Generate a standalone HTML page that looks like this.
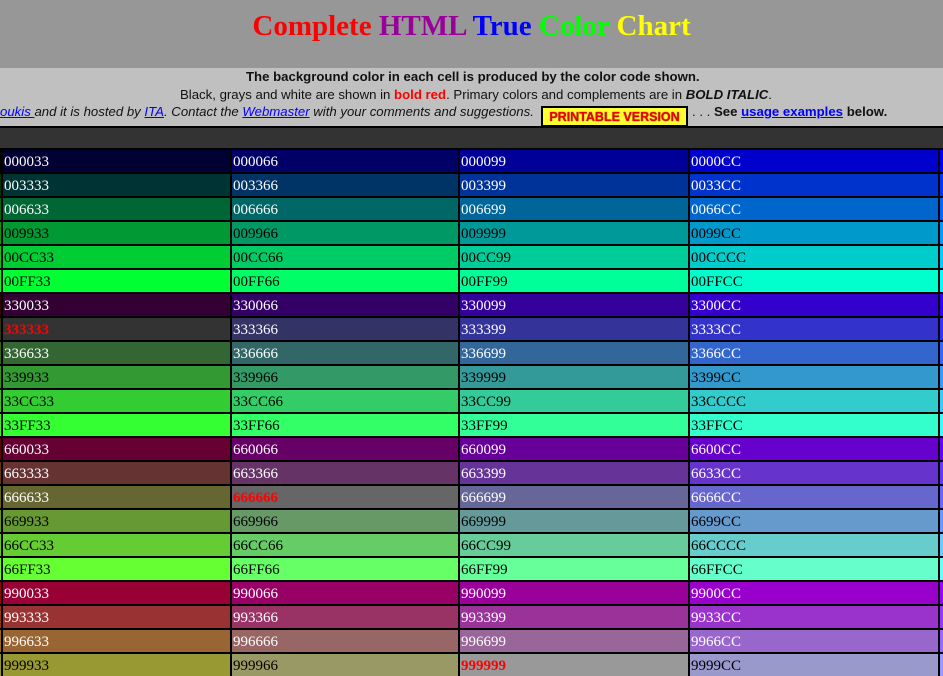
<!DOCTYPE html>
<html><head><meta charset="utf-8"><style>
body{margin:0;width:943px;height:674px;overflow:hidden;background:#000;position:relative;font-family:"Liberation Sans",sans-serif}
#hd{position:absolute;left:0;top:0;width:943px;height:68px;background:#979797}
#hd h1{margin:0;position:absolute;left:0;width:943px;top:10px;text-align:center;font:bold 29px "Liberation Serif",serif;white-space:nowrap}
#info{position:absolute;left:0;top:68px;width:943px;height:58px;background:#c0c0c0;font-size:13.2px;color:#111}
.l{position:absolute;white-space:nowrap}
#bar{position:absolute;left:0;top:128px;width:943px;height:20px;background:#333}
#g{position:absolute;left:0;top:150px;display:grid;grid-template-columns:1px 227px 226px 228px 248px 10px;column-gap:2px;row-gap:2px}
#g div{height:22px;font:15px/22px "Liberation Serif",serif;color:#fff;padding-left:1px;padding-top:1px;box-sizing:border-box;overflow:hidden;white-space:nowrap}
#g div.k{color:#000}
#g div.r{color:#f00;font-weight:bold}
a{color:#00f}
</style></head><body>
<div id="hd"><h1><span style="color:#f00">Complete</span> <span style="color:#909">HTML</span> <span style="color:#00f">True</span> <span style="color:#0f0">Color</span> <span style="color:#ff0">Chart</span></h1></div>
<div id="info">
<div class="l" style="left:246px;top:1px;font-weight:bold">The background color in each cell is produced by the color code shown.</div>
<div class="l" style="left:180px;top:19px">Black, grays and white are shown in <b style="color:#f00">bold red</b>. Primary colors and complements are in <b><i>BOLD ITALIC</i></b>.</div>
<div class="l" style="left:0;top:36px"><i><a href="#">oukis </a> and it is hosted by <a href="#">ITA</a>. Contact the <a href="#">Webmaster</a> with your comments and suggestions.</i></div>
<div class="l" style="left:541px;top:38px;width:143px;height:17px;background:#ff3;border:2px solid #000;color:#e00;font-weight:bold;font-size:12.5px;text-align:center;line-height:19px;text-shadow:0 0 1px #600">PRINTABLE VERSION</div>
<div class="l" style="left:692px;top:36px">. . . <b>See <a href="#">usage examples</a> below.</b></div>
</div>
<div id="bar"></div>
<div id="g">
<div style="background:#000000"></div><div style="background:#000033">000033</div><div style="background:#000066">000066</div><div style="background:#000099">000099</div><div style="background:#0000CC">0000CC</div><div style="background:#0000FF"></div>
<div style="background:#003300"></div><div style="background:#003333">003333</div><div style="background:#003366">003366</div><div style="background:#003399">003399</div><div style="background:#0033CC">0033CC</div><div style="background:#0033FF"></div>
<div style="background:#006600"></div><div style="background:#006633">006633</div><div style="background:#006666">006666</div><div style="background:#006699">006699</div><div style="background:#0066CC">0066CC</div><div style="background:#0066FF"></div>
<div style="background:#009900"></div><div class="k" style="background:#009933">009933</div><div class="k" style="background:#009966">009966</div><div class="k" style="background:#009999">009999</div><div class="k" style="background:#0099CC">0099CC</div><div style="background:#0099FF"></div>
<div style="background:#00CC00"></div><div class="k" style="background:#00CC33">00CC33</div><div class="k" style="background:#00CC66">00CC66</div><div class="k" style="background:#00CC99">00CC99</div><div class="k" style="background:#00CCCC">00CCCC</div><div style="background:#00CCFF"></div>
<div style="background:#00FF00"></div><div class="k" style="background:#00FF33">00FF33</div><div class="k" style="background:#00FF66">00FF66</div><div class="k" style="background:#00FF99">00FF99</div><div class="k" style="background:#00FFCC">00FFCC</div><div style="background:#00FFFF"></div>
<div style="background:#330000"></div><div style="background:#330033">330033</div><div style="background:#330066">330066</div><div style="background:#330099">330099</div><div style="background:#3300CC">3300CC</div><div style="background:#3300FF"></div>
<div style="background:#333300"></div><div class="r" style="background:#333333">333333</div><div style="background:#333366">333366</div><div style="background:#333399">333399</div><div style="background:#3333CC">3333CC</div><div style="background:#3333FF"></div>
<div style="background:#336600"></div><div style="background:#336633">336633</div><div style="background:#336666">336666</div><div style="background:#336699">336699</div><div style="background:#3366CC">3366CC</div><div style="background:#3366FF"></div>
<div style="background:#339900"></div><div class="k" style="background:#339933">339933</div><div class="k" style="background:#339966">339966</div><div class="k" style="background:#339999">339999</div><div class="k" style="background:#3399CC">3399CC</div><div style="background:#3399FF"></div>
<div style="background:#33CC00"></div><div class="k" style="background:#33CC33">33CC33</div><div class="k" style="background:#33CC66">33CC66</div><div class="k" style="background:#33CC99">33CC99</div><div class="k" style="background:#33CCCC">33CCCC</div><div style="background:#33CCFF"></div>
<div style="background:#33FF00"></div><div class="k" style="background:#33FF33">33FF33</div><div class="k" style="background:#33FF66">33FF66</div><div class="k" style="background:#33FF99">33FF99</div><div class="k" style="background:#33FFCC">33FFCC</div><div style="background:#33FFFF"></div>
<div style="background:#660000"></div><div style="background:#660033">660033</div><div style="background:#660066">660066</div><div style="background:#660099">660099</div><div style="background:#6600CC">6600CC</div><div style="background:#6600FF"></div>
<div style="background:#663300"></div><div style="background:#663333">663333</div><div style="background:#663366">663366</div><div style="background:#663399">663399</div><div style="background:#6633CC">6633CC</div><div style="background:#6633FF"></div>
<div style="background:#666600"></div><div style="background:#666633">666633</div><div class="r" style="background:#666666">666666</div><div style="background:#666699">666699</div><div style="background:#6666CC">6666CC</div><div style="background:#6666FF"></div>
<div style="background:#669900"></div><div class="k" style="background:#669933">669933</div><div class="k" style="background:#669966">669966</div><div class="k" style="background:#669999">669999</div><div class="k" style="background:#6699CC">6699CC</div><div style="background:#6699FF"></div>
<div style="background:#66CC00"></div><div class="k" style="background:#66CC33">66CC33</div><div class="k" style="background:#66CC66">66CC66</div><div class="k" style="background:#66CC99">66CC99</div><div class="k" style="background:#66CCCC">66CCCC</div><div style="background:#66CCFF"></div>
<div style="background:#66FF00"></div><div class="k" style="background:#66FF33">66FF33</div><div class="k" style="background:#66FF66">66FF66</div><div class="k" style="background:#66FF99">66FF99</div><div class="k" style="background:#66FFCC">66FFCC</div><div style="background:#66FFFF"></div>
<div style="background:#990000"></div><div style="background:#990033">990033</div><div style="background:#990066">990066</div><div style="background:#990099">990099</div><div style="background:#9900CC">9900CC</div><div style="background:#9900FF"></div>
<div style="background:#993300"></div><div style="background:#993333">993333</div><div style="background:#993366">993366</div><div style="background:#993399">993399</div><div style="background:#9933CC">9933CC</div><div style="background:#9933FF"></div>
<div style="background:#996600"></div><div style="background:#996633">996633</div><div style="background:#996666">996666</div><div style="background:#996699">996699</div><div style="background:#9966CC">9966CC</div><div style="background:#9966FF"></div>
<div style="background:#999900"></div><div class="k" style="background:#999933">999933</div><div class="k" style="background:#999966">999966</div><div class="r" style="background:#999999">999999</div><div class="k" style="background:#9999CC">9999CC</div><div style="background:#9999FF"></div>
</div>
</body></html>
